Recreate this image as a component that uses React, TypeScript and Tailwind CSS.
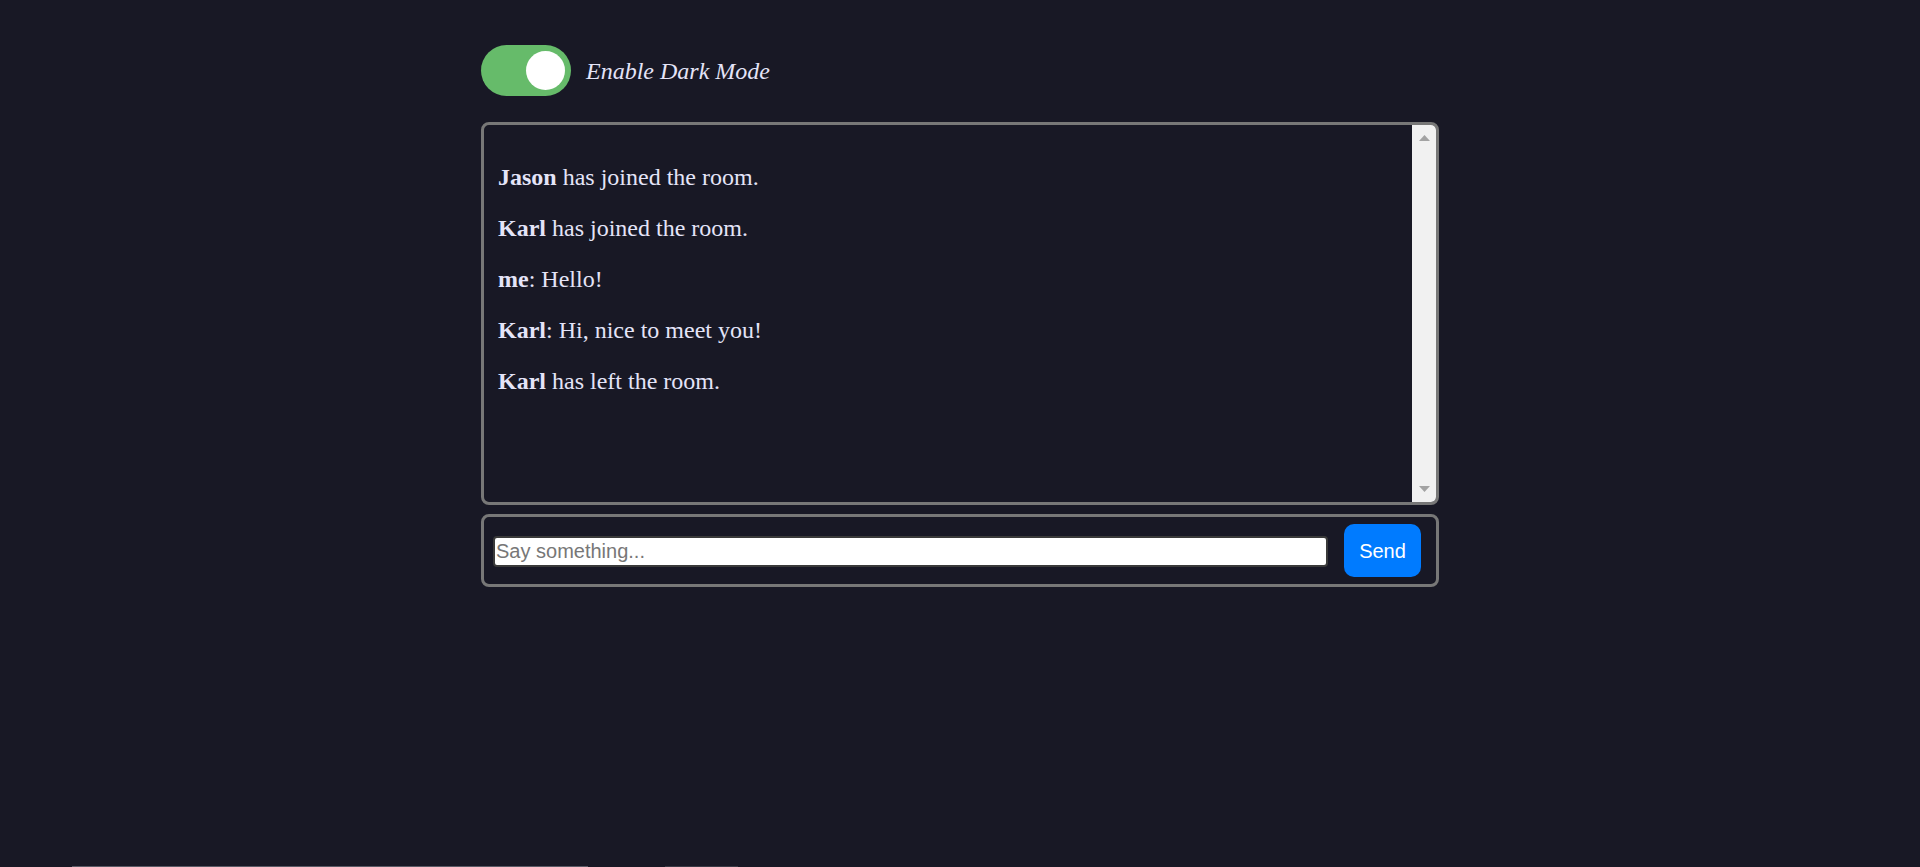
import { useState } from 'react';

const messages = [
  { who: 'Jason', text: ' has joined the room.' },
  { who: 'Karl', text: ' has joined the room.' },
  { who: 'me', text: ': Hello!' },
  { who: 'Karl', text: ': Hi, nice to meet you!' },
  { who: 'Karl', text: ' has left the room.' },
];

export default function App() {
  const [dark, setDark] = useState(true);

  return (
    <div className="h-[867px] bg-[#181825] flex flex-col overflow-hidden">
      <div className="w-[958px] mx-auto pt-[45px]">
        {/* toggle */}
        <div className="flex items-center gap-[15px] h-[51px]">
          <button
            onClick={() => setDark(!dark)}
            className="w-[90px] h-[51px] rounded-full bg-[#66bb6a] flex items-center justify-end px-[6px]"
          >
            <span className="w-[39px] h-[39px] rounded-full bg-white block" />
          </button>
          <span className="italic text-[24px] text-[#e4e4f8] font-['Liberation_Serif',serif]">
            Enable Dark Mode
          </span>
        </div>

        {/* chat log */}
        <div className="mt-[26px] h-[383px] border-[3px] border-[#777] rounded-[8px] flex overflow-hidden">
          <div className="flex-1 pl-[14px] pt-[39px] font-['Liberation_Serif',serif] text-[24px] leading-[27px] text-[#e4e4f8]">
            {messages.map((m, i) => (
              <p key={i} className="mb-[24px]">
                <b>{m.who}</b>
                {m.text}
              </p>
            ))}
          </div>
          <div className="w-[24px] bg-[#f1f1f1] flex flex-col items-center justify-between py-[10px]">
            <svg width="11" height="6" viewBox="0 0 11 6">
              <polygon points="5.5,0 11,6 0,6" fill="#a3a3a3" />
            </svg>
            <svg width="11" height="6" viewBox="0 0 11 6">
              <polygon points="0,0 11,0 5.5,6" fill="#a3a3a3" />
            </svg>
          </div>
        </div>

        {/* input */}
        <div className="mt-[9px] h-[73px] border-[3px] border-[#777] rounded-[8px] flex items-center pl-[9px] pr-[15px] gap-[16px]">
          <input
            placeholder="Say something..."
            className="flex-1 h-[31px] mt-[2px] bg-white border-2 border-[#3a3a3a] rounded-[4px] px-[1px] text-[20px] font-['Liberation_Sans',sans-serif] text-black placeholder:text-[#777] outline-none"
          />
          <button className="w-[77px] h-[53px] bg-[#007bff] rounded-[10px] text-white text-[20px] font-['Liberation_Sans',sans-serif]">
            Send
          </button>
        </div>
      </div>

      <div className="mt-auto flex h-[1px]">
        <div className="w-[72px]" />
        <div className="w-[516px] bg-[#5a5a66]" />
        <div className="w-[77px]" />
        <div className="w-[73px] bg-[#3a3a46]" />
      </div>
    </div>
  );
}
